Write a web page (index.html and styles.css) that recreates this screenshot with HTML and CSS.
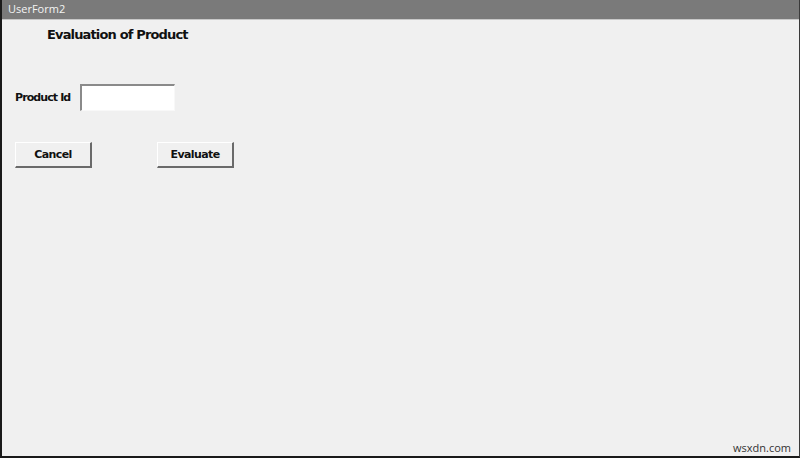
FILE: index.html
```html
<!DOCTYPE html>
<html>
<head>
<meta charset="utf-8">
<link rel="stylesheet" href="styles.css">
</head>
<body>
<div class="window">
  <div class="titlebar">UserForm2</div>
  <div class="client">
    <h1 class="heading">Evaluation of Product</h1>
    <div class="field-row">
      <label class="label" for="pid">Product Id</label>
      <input class="textbox" id="pid" type="text">
    </div>
    <div class="button-row">
      <button class="btn">Cancel</button>
      <button class="btn">Evaluate</button>
    </div>
    <div class="spacer"></div>
    <div class="watermark">wsxdn.com</div>
  </div>
</div>
</body>
</html>
```
FILE: styles.css
```css
html, body {
  margin: 0;
  padding: 0;
}
body {
  width: 800px;
  height: 458px;
  overflow: hidden;
  font-family: "DejaVu Sans", sans-serif;
}
.window {
  box-sizing: border-box;
  width: 800px;
  height: 458px;
  border-left: 2px solid #1a1a1a;
  border-right: 1px solid #3a3a3a;
  border-bottom: 2px solid #1a1a1a;
  display: flex;
  flex-direction: column;
  background: #f0f0f0;
}
.titlebar {
  height: 19px;
  background: #7a7a7a;
  color: #f4f4f4;
  font-family: "Open Sans", sans-serif;
  font-size: 11px;
  line-height: 17px;
  padding-left: 6px;
  border-bottom: 1px solid #c8c8c8;
}
.client {
  flex: 1;
  display: flex;
  flex-direction: column;
  padding-left: 13px;
}
.heading {
  margin: 7px 0 0 32px;
  font-size: 13px;
  font-weight: bold;
  line-height: 16px;
  letter-spacing: -0.85px;
  color: #111;
}
.field-row {
  display: flex;
  align-items: center;
  margin-top: 41px;
  gap: 10px;
}
.label {
  font-size: 11px;
  font-weight: bold;
  letter-spacing: -0.9px;
  color: #111;
  font-family: "DejaVu Sans", sans-serif;
}
.textbox {
  box-sizing: border-box;
  width: 95px;
  height: 27px;
  margin: 0;
  padding: 0;
  background: #fff;
  border-style: solid;
  border-width: 2px 1px 1px 2px;
  border-color: #8a8a8a #f8f8f8 #f8f8f8 #8a8a8a;
  outline: none;
}
.button-row {
  display: flex;
  margin-top: 31px;
  gap: 65px;
}
.btn {
  box-sizing: border-box;
  width: 77px;
  height: 26px;
  margin: 0;
  padding: 0;
  background: #f0f0f0;
  border-style: solid;
  border-width: 1px 2px 2px 1px;
  border-color: #ffffff #6a6a6a #6a6a6a #ffffff;
  font-family: "DejaVu Sans", sans-serif;
  font-size: 11px;
  font-weight: bold;
  letter-spacing: -0.6px;
  color: #111;
}
.spacer {
  flex: 1;
}
.watermark {
  align-self: flex-end;
  font-family: "Open Sans", sans-serif;
  font-size: 11px;
  color: #333;
  margin: 0 8px 1px 0;
  line-height: 14px;
}
```
